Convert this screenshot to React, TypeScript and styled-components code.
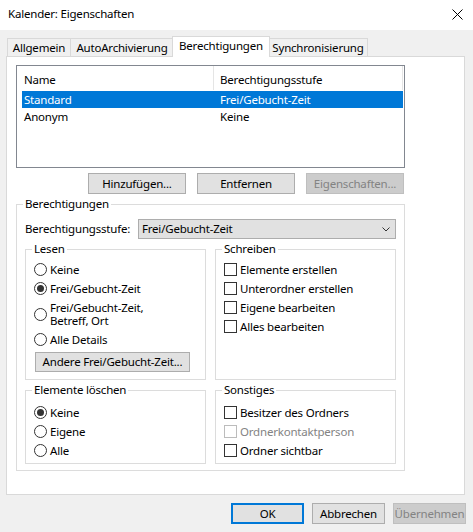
import React from 'react';
import styled, { createGlobalStyle } from 'styled-components';

const GlobalStyle = createGlobalStyle`
  html, body {
    margin: 0;
    padding: 0;
  }
  body {
    background: #f0f0f0;
    font-family: "Noto Sans", "Open Sans", sans-serif;
    font-size: 11.5px;
    letter-spacing: -0.2px;
    color: #000;
  }
  * {
    box-sizing: border-box;
  }
`;

const Window = styled.div`
  width: 473px;
  height: 532px;
  background: #f0f0f0;
  display: flex;
  flex-direction: column;
  overflow: hidden;
`;

const TitleBar = styled.div`
  height: 30px;
  background: #fff;
  display: flex;
  align-items: center;
  justify-content: space-between;
  padding: 0 10px 2px 8px;
`;

const Title = styled.span`
  line-height: 16px;
`;

const CloseButton = styled.svg`
  display: block;
`;

const Body = styled.div`
  padding: 6px 0 0 6px;
`;

const TabStrip = styled.div`
  display: flex;
  align-items: flex-end;
  padding-left: 1px;
`;

const Tab = styled.div<{ $active?: boolean; $width: number; $first?: boolean; $afterActive?: boolean }>`
  width: ${p => p.$width}px;
  height: ${p => (p.$active ? 21 : 18)}px;
  margin-bottom: ${p => (p.$active ? -1 : 0)}px;
  margin-left: ${p => (p.$first ? 0 : p.$active || p.$afterActive ? -2 : -1)}px;
  padding-bottom: ${p => (p.$active ? 2 : 0)}px;
  border: 1px solid #d9d9d9;
  border-bottom: none;
  background: ${p => (p.$active ? '#fff' : '#f0f0f0')};
  position: ${p => (p.$active ? 'relative' : 'static')};
  z-index: ${p => (p.$active ? 1 : 0)};
  display: flex;
  align-items: center;
  justify-content: center;
  white-space: nowrap;
  line-height: 16px;
`;

const Panel = styled.div`
  width: 459px;
  height: 439px;
  background: #fff;
  border: 1px solid #d9d9d9;
  padding: 8px 0 0 9px;
`;

const PanelColumn = styled.div`
  width: 389px;
  display: flex;
  flex-direction: column;
`;

const ListView = styled.div`
  height: 103px;
  border: 1px solid #828790;
  background: #fff;
  padding: 0 1px 0 5px;
`;

const ListHeader = styled.div`
  display: grid;
  grid-template-columns: 191px 1fr;
  height: 25px;
`;

const HeaderCell = styled.div<{ $divider?: boolean }>`
  padding: 6px 0 0 ${p => (p.$divider ? 6 : 2)}px;
  line-height: 16px;
  border-left: ${p => (p.$divider ? '1px solid #e5e5e5' : 'none')};
  border-right: ${p => (p.$divider ? '1px solid #e5e5e5' : 'none')};
  height: 24px;
`;

const ListRow = styled.div<{ $selected?: boolean }>`
  display: grid;
  grid-template-columns: 191px 1fr;
  height: 17px;
  line-height: 17px;
  background: ${p => (p.$selected ? '#0078d7' : 'transparent')};
  color: ${p => (p.$selected ? '#fff' : '#000')};
`;

const RowCell = styled.div<{ $second?: boolean }>`
  padding-left: ${p => (p.$second ? 7 : 2)}px;
  white-space: nowrap;
`;

const ButtonRow = styled.div`
  display: flex;
  justify-content: flex-end;
  gap: 11px;
  margin-top: 5px;
  padding-right: 1px;
`;

const Button = styled.button<{ $width: number; $height?: number; $default?: boolean }>`
  width: ${p => p.$width}px;
  height: ${p => p.$height ?? 21}px;
  padding: 0;
  margin: 0;
  font: inherit;
  letter-spacing: inherit;
  line-height: 16px;
  color: #000;
  background: #e1e1e1;
  border: ${p => (p.$default ? '2px solid #0078d7' : '1px solid #adadad')};
  border-radius: 0;
  white-space: nowrap;

  &:disabled {
    background: #cccccc;
    border-color: #bfbfbf;
    color: #838383;
  }
`;

const Group = styled.fieldset<{ $pt: number; $pb: number }>`
  margin: 0;
  min-width: 0;
  border: 1px solid #dcdcdc;
  padding: ${p => p.$pt}px 8px ${p => p.$pb}px 8px;
`;

const MainGroup = styled(Group)`
  margin-top: 2px;
`;

const Legend = styled.legend`
  padding: 0 2px;
  margin-left: -2px;
  line-height: 16px;
`;

const LevelRow = styled.div`
  display: flex;
  align-items: center;
  justify-content: space-between;
  height: 20px;
`;

const LevelLabel = styled.span`
  line-height: 16px;
`;

const ComboBox = styled.div`
  width: 258px;
  height: 20px;
  background: #e1e1e1;
  border: 1px solid #adadad;
  display: flex;
  align-items: center;
  justify-content: space-between;
  padding: 0 5px 0 3px;
  line-height: 16px;
`;

const GroupGrid = styled.div<{ $mt: number }>`
  display: grid;
  grid-template-columns: 1fr 1fr;
  gap: 9px;
  margin-top: ${p => p.$mt}px;
`;

const Option = styled.div<{ $lines?: number; $disabled?: boolean }>`
  display: flex;
  align-items: center;
  gap: 3px;
  height: ${p => (p.$lines === 2 ? 32 : 19)}px;
  color: ${p => (p.$disabled ? '#838383' : '#000')};
`;

const OptionText = styled.span<{ $lines?: number }>`
  line-height: ${p => (p.$lines === 2 ? 13 : 16)}px;
  white-space: pre-line;
`;

const RadioCircle = styled.span<{ $checked?: boolean }>`
  flex: none;
  width: 13px;
  height: 13px;
  border: 1px solid #333;
  border-radius: 50%;
  background: #fff;
  display: flex;
  align-items: center;
  justify-content: center;

  &::after {
    content: '';
    width: 7px;
    height: 7px;
    border-radius: 50%;
    background: #333;
    display: ${p => (p.$checked ? 'block' : 'none')};
  }
`;

const CheckBox = styled.span<{ $disabled?: boolean }>`
  flex: none;
  width: 13px;
  height: 13px;
  border: 1px solid ${p => (p.$disabled ? '#bcbcbc' : '#333')};
  background: #fff;
`;

const OtherButtonWrap = styled.div`
  margin-top: 3px;
  padding-left: 1px;
`;

const Footer = styled.div`
  display: flex;
  justify-content: flex-end;
  gap: 8px;
  margin-top: 8px;
  padding-right: 7px;
`;

const tabs = [
  { label: 'Allgemein', width: 64 },
  { label: 'AutoArchivierung', width: 104 },
  { label: 'Berechtigungen', width: 98 },
  { label: 'Synchronisierung', width: 100 },
];
const activeTab = 2;

const entries = [
  { name: 'Standard', level: 'Frei/Gebucht-Zeit', selected: true },
  { name: 'Anonym', level: 'Keine' },
];

const readOptions = [
  { label: 'Keine' },
  { label: 'Frei/Gebucht-Zeit', checked: true },
  { label: 'Frei/Gebucht-Zeit,\nBetreff, Ort', lines: 2 },
  { label: 'Alle Details' },
];

const writeOptions = ['Elemente erstellen', 'Unterordner erstellen', 'Eigene bearbeiten', 'Alles bearbeiten'];

const deleteOptions = [{ label: 'Keine', checked: true }, { label: 'Eigene' }, { label: 'Alle' }];

const otherOptions = [
  { label: 'Besitzer des Ordners' },
  { label: 'Ordnerkontaktperson', disabled: true },
  { label: 'Ordner sichtbar' },
];

const Radio: React.FC<{ label: string; checked?: boolean; lines?: number }> = ({ label, checked, lines }) => (
  <Option $lines={lines}>
    <RadioCircle $checked={checked} />
    <OptionText $lines={lines}>{label}</OptionText>
  </Option>
);

const Check: React.FC<{ label: string; disabled?: boolean }> = ({ label, disabled }) => (
  <Option $disabled={disabled}>
    <CheckBox $disabled={disabled} />
    <OptionText>{label}</OptionText>
  </Option>
);

const App: React.FC = () => {
  return (
    <Window>
      <GlobalStyle />
      <TitleBar>
        <Title>Kalender: Eigenschaften</Title>
        <CloseButton width="11" height="11" viewBox="0 0 11 11">
          <path d="M0.5 0.5 L10.5 10.5 M10.5 0.5 L0.5 10.5" stroke="#000" strokeWidth="1" fill="none" />
        </CloseButton>
      </TitleBar>

      <Body>
        <TabStrip>
          {tabs.map((tab, i) => (
            <Tab
              key={tab.label}
              $width={tab.width}
              $first={i === 0}
              $active={i === activeTab}
              $afterActive={i === activeTab + 1}
            >
              {tab.label}
            </Tab>
          ))}
        </TabStrip>

        <Panel>
          <PanelColumn>
            <ListView>
              <ListHeader>
                <HeaderCell>Name</HeaderCell>
                <HeaderCell $divider>Berechtigungsstufe</HeaderCell>
              </ListHeader>
              {entries.map(entry => (
                <ListRow key={entry.name} $selected={entry.selected}>
                  <RowCell>{entry.name}</RowCell>
                  <RowCell $second>{entry.level}</RowCell>
                </ListRow>
              ))}
            </ListView>

            <ButtonRow>
              <Button $width={98}>Hinzufügen...</Button>
              <Button $width={98}>Entfernen</Button>
              <Button $width={98} disabled>
                Eigenschaften...
              </Button>
            </ButtonRow>

            <MainGroup $pt={7} $pb={6}>
              <Legend>Berechtigungen</Legend>
              <LevelRow>
                <LevelLabel>Berechtigungsstufe:</LevelLabel>
                <ComboBox>
                  <span>Frei/Gebucht-Zeit</span>
                  <svg width="8" height="5" viewBox="0 0 8 5">
                    <path d="M0.5 0.5 L4 4 L7.5 0.5" stroke="#333" strokeWidth="1" fill="none" />
                  </svg>
                </ComboBox>
              </LevelRow>

              <GroupGrid $mt={2}>
                <Group $pt={3} $pb={7}>
                  <Legend>Lesen</Legend>
                  {readOptions.map(o => (
                    <Radio key={o.label} label={o.label} checked={o.checked} lines={o.lines} />
                  ))}
                  <OtherButtonWrap>
                    <Button $width={155} $height={20}>
                      Andere Frei/Gebucht-Zeit...
                    </Button>
                  </OtherButtonWrap>
                </Group>
                <Group $pt={3} $pb={7}>
                  <Legend>Schreiben</Legend>
                  {writeOptions.map(label => (
                    <Check key={label} label={label} />
                  ))}
                </Group>
              </GroupGrid>

              <GroupGrid $mt={2}>
                <Group $pt={5} $pb={3}>
                  <Legend>Elemente löschen</Legend>
                  {deleteOptions.map(o => (
                    <Radio key={o.label} label={o.label} checked={o.checked} />
                  ))}
                </Group>
                <Group $pt={5} $pb={3}>
                  <Legend>Sonstiges</Legend>
                  {otherOptions.map(o => (
                    <Check key={o.label} label={o.label} disabled={o.disabled} />
                  ))}
                </Group>
              </GroupGrid>
            </MainGroup>
          </PanelColumn>
        </Panel>
      </Body>

      <Footer>
        <Button $width={73} $default>
          OK
        </Button>
        <Button $width={73}>Abbrechen</Button>
        <Button $width={73} disabled>
          Übernehmen
        </Button>
      </Footer>
    </Window>
  );
};

export default App;
